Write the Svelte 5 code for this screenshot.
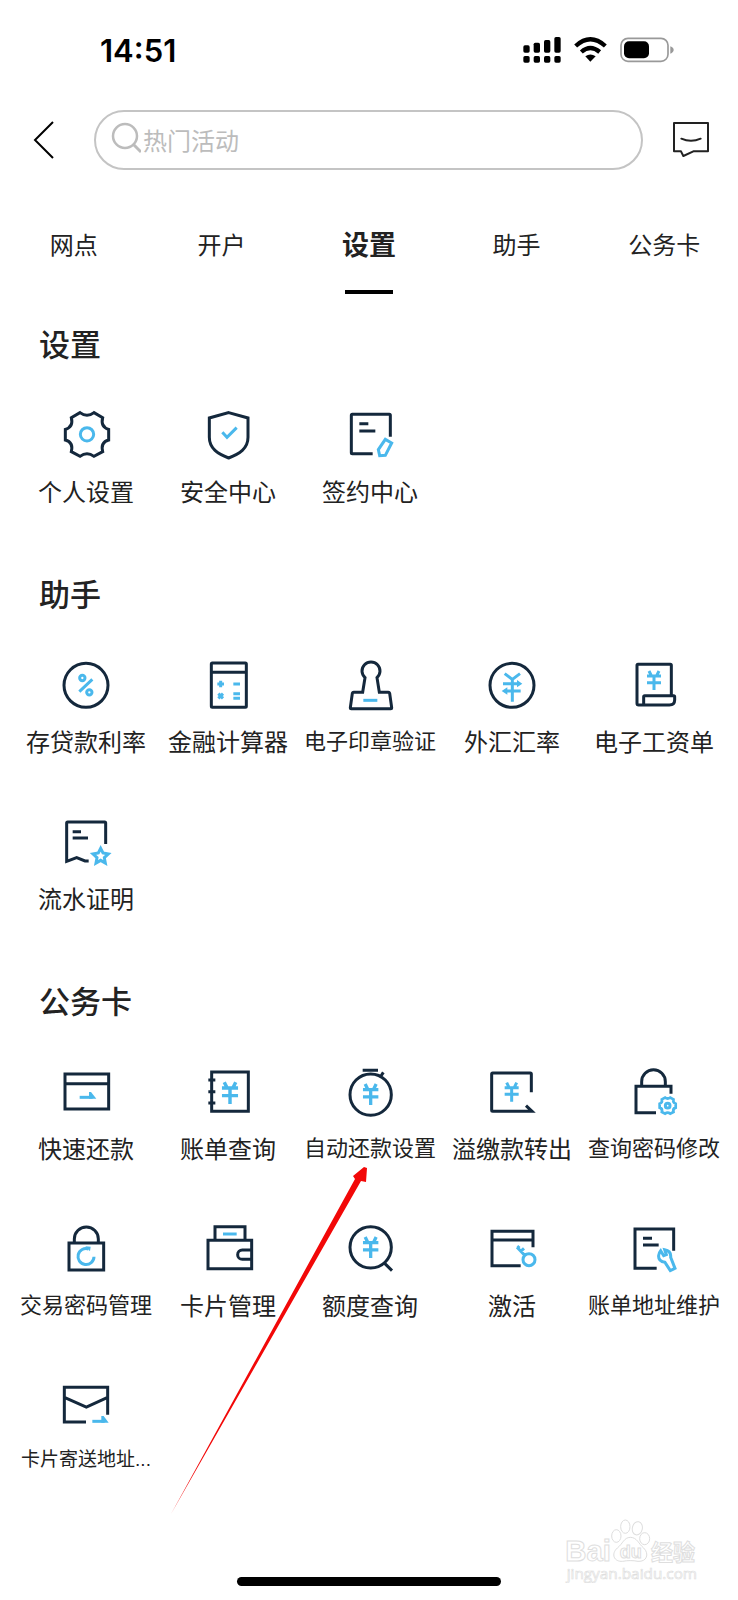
<script>
	const YEN = "M-15 -29L-8 -15M15 -29L8 -15M-21 -14H21M-21 6H21M0 -14V28";
	const GEAR =
		"M66 20Q87 36 108 20L134 35Q127 63 152 70V102Q127 109 134 137L108 151Q87 135 66 151L40 137Q47 109 22 102V70Q47 63 40 35Z";

	const tabs = ["网点", "开户", "设置", "助手", "公务卡"];
	let active = $state("设置");
	let keyword = $state("");

	// dark: outline, blue: accent strokes, fill: solid accent shapes, yen: [x, y, scale]
	const sections = [
		{
			title: "设置",
			items: [
				{ name: "个人设置", dark: GEAR, blue: "M107 85A20 20 0 1 1 67 85A20 20 0 1 1 107 85Z" },
				{
					name: "安全中心",
					dark: "M86 20L144 36V94C144 128 118 144 86 156C54 144 28 128 28 94V36Z",
					blue: "M67 79L81 94L110 65",
				},
				{
					name: "签约中心",
					dark: "M145 92V28Q145 25 142 25H31Q28 25 28 28V140Q28 143 31 143H92M52 53H79M52 75H100",
					blue: "M130 100L149 111L130 148L113 149L109 131Z",
				},
			],
		},
		{
			title: "助手",
			items: [
				{
					name: "存贷款利率",
					dark: "M150 88A66 66 0 1 1 18 88A66 66 0 1 1 150 88Z",
					blue: "M81 66A8 8 0 1 1 65 66A8 8 0 1 1 81 66ZM102 109A8 8 0 1 1 86 109A8 8 0 1 1 102 109ZM103 70L64 107",
				},
				{
					name: "金融计算器",
					dark: "M37 21H136Q139 21 139 24V151Q139 154 136 154H37Q34 154 34 151V24Q34 21 37 21ZM34 49H139",
					blue: "M52 84H72M62 74V94M100 84H120M55 113L69 127M69 113L55 127M100 113H120M100 127H120",
				},
				{
					name: "电子印章验证",
					dark: "M69 65L62 109H35Q32 109 31 112L25 155Q25 158 28 158H146Q149 158 149 155L143 112Q142 109 139 109H112L105 65A27 27 0 1 0 69 65Z",
					blue: "M64 133H106",
				},
				{
					name: "外汇汇率",
					dark: "M150 88A66 66 0 1 1 18 88A66 66 0 1 1 150 88Z",
					blue: "M62 53L85 70L108 53M85 70V137M57 83H104M66 105H110",
					fill: "M99 72L115 83L99 94ZM70 94L53 105L70 116Z",
				},
				{
					name: "电子工资单",
					dark: "M136 117V28Q136 25 133 25H36Q33 25 33 28V142Q33 147 38 147H130Q146 147 146 132V122Q146 119 143 119H56Q53 119 53 122V147",
					yen: [84, 74, 1],
				},
				{
					name: "流水证明",
					dark: "M143 93V30Q143 27 140 27H29Q26 27 26 30V145L56 134L81 144H92M44 56H69M44 75H90",
					blue: "M128 106L135 120L151 123L139 134L142 150L128 142L114 150L117 134L105 123L121 120Z",
				},
			],
		},
		{
			title: "公务卡",
			items: [
				{ name: "快速还款", dark: "M21 33H152V138H21ZM21 62H152", blue: "M65 103H104", fill: "M93 87H99L115 107H93Z" },
				{
					name: "账单查询",
					dark: "M35 27H145V145H35ZM25 51H46M25 86H46M25 120H46",
					yen: [90, 91, 1.15],
				},
				{
					name: "自动还款设置",
					dark: "M148 95A62 62 0 1 1 24 95A62 62 0 1 1 148 95ZM62 22H108M124 28L117 39",
					yen: [86, 95, 1.1],
				},
				{
					name: "溢缴款转出",
					dark: "M142 88V33Q142 30 139 30H26Q23 30 23 33V142Q23 145 26 145H144L126 128",
					yen: [83, 88, 1],
				},
				{
					name: "查询密码修改",
					dark: "M135 92V70H30V149H90M47 70V56A35 35 0 0 1 118 56V70",
					gear: [125, 128],
				},
				{
					name: "交易密码管理",
					dark: "M33 69H137V150H33ZM49 69V57A36 36 0 0 1 121 57V69",
					blue: "M108 110A24 24 0 1 1 92 87",
					fill: "M82 79L98 80L96 94Z",
				},
				{
					name: "卡片管理",
					dark: "M24 61H155V146H24ZM45 61V20H135V61M155 90H127A14 14 0 0 0 127 118H155",
					blue: "M69 42H110",
				},
				{
					name: "额度查询",
					dark: "M148 82A62 62 0 1 1 24 82A62 62 0 1 1 148 82ZM128 130L150 152",
					yen: [86, 83, 1.1],
				},
				{
					name: "激活",
					dark: "M147 82V34H24V137H110M24 60H147",
					blue: "M153 119A18 18 0 1 1 117 119A18 18 0 1 1 153 119ZM122 106L99 82M110 94L120 85M101 84L106 78",
				},
				{
					name: "账单地址维护",
					dark: "M143 92V27H27V145H92M51 55H78M51 75H98",
					blue: "M104 92L113 107L121 104L116 89Q136 92 134 112L147 145L133 152L117 127Q96 124 98 106Q99 98 104 92Z",
				},
				{
					name: "卡片寄送地址...",
					dark: "M149 113V31H19V135H84M19 61L85 90L149 61",
					blue: "M103 133H140",
					fill: "M130 117H137L152 137H130Z",
				},
			],
		},
	];

	/**
	 * long names step down in size so they stay on one line
	 * @param name
	 */
	function labelSize(name) {
		if (name.length > 6) return "small";
		return name.length > 5 ? "medium" : "";
	}
</script>

<div class="page">
	<div class="status">
		<span class="time">14:51</span>
		<svg width="38" height="26" viewBox="0 0 114 78">
			<rect x="1" y="25" width="19" height="22" rx="5" />
			<rect x="32" y="17" width="19" height="30" rx="5" />
			<rect x="63" y="9" width="19" height="38" rx="5" />
			<rect x="94" y="0" width="19" height="47" rx="5" />
			<rect x="1" y="57" width="19" height="20" rx="5" />
			<rect x="32" y="57" width="19" height="20" rx="5" />
			<rect x="63" y="57" width="19" height="20" rx="5" />
			<rect x="94" y="57" width="19" height="20" rx="5" />
		</svg>
		<svg width="33" height="26" viewBox="0 0 99 78">
			<path d="M5 27Q49 -13 94 27M22 45Q49 21 77 45" fill="none" stroke="#000" stroke-width="13" />
			<path d="M34 58Q49 47 65 58L49 74Z" />
		</svg>
		<svg class="battery" width="54" height="26" viewBox="0 0 162 78">
			<rect x="3" y="4" width="141" height="69" rx="21" fill="none" stroke="#999" stroke-width="5" />
			<rect x="12" y="13" width="75" height="51" rx="15" />
			<path d="M151 28Q161 32 161 39Q161 46 151 50Z" fill="#999" />
		</svg>
	</div>

	<header>
		<button class="icon-button" aria-label="返回">
			<svg width="22" height="40" viewBox="0 0 22 40" fill="none" stroke="#000" stroke-width="2">
				<path d="M20 2L2 20L20 38" />
			</svg>
		</button>
		<label class="search">
			<svg width="30" height="34" viewBox="0 0 30 34" fill="none" stroke="#bcbcbc">
				<circle cx="14" cy="14" r="12" stroke-width="2.5" />
				<path d="M22 22L30 30" stroke-width="3" />
			</svg>
			<input type="text" placeholder="热门活动" aria-label="搜索" bind:value={keyword} />
		</label>
		<button class="icon-button" aria-label="消息">
			<svg width="38" height="38" viewBox="0 0 114 114" fill="none" stroke="#222" stroke-width="6" stroke-linejoin="round">
				<path d="M6 6H108V91H64L34 105L27 91H6Z" />
				<path d="M28 53Q57 66 86 53" stroke-linecap="round" />
			</svg>
		</button>
	</header>

	<nav>
		{#each tabs as tab}
			<button class="tab" class:active={tab === active} onclick={() => (active = tab)}>{tab}</button>
		{/each}
	</nav>

	<main>
		{#each sections as section}
			<section>
				<h2>{section.title}</h2>
				<div class="grid">
					{#each section.items as item}
						<button class="item">
							<svg class="icon" viewBox="0 0 168 168">
								<path class="dark" d={item.dark} />
								{#if item.blue}
									<path class="blue" d={item.blue} />
								{/if}
								{#if item.fill}
									<path class="solid" d={item.fill} />
								{/if}
								{#if item.yen}
									<path class="blue" d={YEN} transform="translate({item.yen[0]} {item.yen[1]}) scale({item.yen[2]})" />
								{/if}
								{#if item.gear}
									<g transform="translate({item.gear[0]} {item.gear[1]})">
										<path class="blue tiny" d={GEAR} transform="scale(0.37) translate(-87 -86)" />
										<circle class="blue" r="7" />
									</g>
								{/if}
							</svg>
							<span class="label {labelSize(item.name)}">{item.name}</span>
						</button>
					{/each}
				</div>
			</section>
		{/each}
	</main>

	<div class="home"></div>

	<svg class="pointer" width="204" height="356" viewBox="0 0 204 356">
		<path d="M3 354L187 19L185 16L196 7L199 8L198 22L193 21Z" fill="#f20808" />
	</svg>

	<svg class="watermark" width="137" height="65" viewBox="0 0 411 195">
		<g fill="#fff" stroke="#dedede" stroke-width="3">
			<text class="latin" x="4" y="130" font-size="88">Bai</text>
			<ellipse cx="157" cy="54" rx="14" ry="19" />
			<ellipse cx="184" cy="26" rx="14" ry="20" />
			<ellipse cx="220" cy="31" rx="15" ry="20" transform="rotate(12 220 31)" />
			<ellipse cx="242" cy="62" rx="15" ry="18" />
			<path d="M199 58C219 58 224 78 239 90C257 108 248 132 222 130C207 127 190 127 176 130C150 132 140 108 160 90C176 78 180 58 199 58Z" />
			<text class="latin" x="167" y="121" font-size="54">du</text>
			<text class="han" x="261" y="125" font-size="66">经验</text>
			<text class="url" x="8" y="184" font-size="46">jingyan.baidu.com</text>
		</g>
	</svg>
</div>

<style>
	:global(body) {
		background: #fff;
	}

	.page {
		position: relative;
		display: flex;
		flex-direction: column;
		min-height: 100vh;
		box-sizing: border-box;
		padding-bottom: 14px;
		overflow: hidden;
		font-family: "Liberation Sans", "Noto Sans CJK SC", sans-serif;
		color: #222;
	}

	button {
		border: 0;
		padding: 0;
		background: none;
		font: inherit;
		color: inherit;
	}

	svg {
		display: block;
		flex: none;
	}

	.status {
		display: flex;
		align-items: center;
		gap: 13px;
		height: 98px;
		padding: 2px 64px 0 100px;
		box-sizing: border-box;
		color: #000;
	}

	.time {
		margin-right: auto;
		font: 600 31px "Inter", sans-serif;
	}

	header {
		display: flex;
		align-items: center;
		gap: 29px;
		padding: 12px 28px 0 33px;
	}

	.search {
		display: flex;
		flex: 1;
		align-items: center;
		gap: 2px;
		height: 60px;
		margin-left: 10px;
		padding: 0 24px 2px 15px;
		box-sizing: border-box;
		border: 2px solid #c4c4c4;
		border-radius: 30px;
	}

	input {
		flex: 1;
		min-width: 0;
		padding: 0;
		border: 0;
		outline: 0;
		background: none;
		font: 24px "Noto Sans CJK SC", sans-serif;
	}

	input::placeholder {
		color: #bcbcbc;
		opacity: 1;
	}

	nav {
		display: flex;
		margin-top: 30px;
	}

	.tab {
		position: relative;
		flex: 1;
		height: 94px;
		padding-bottom: 8px;
		font-size: 24px;
	}

	.tab.active {
		font-size: 27px;
		font-weight: 600;
	}

	.tab.active::after {
		content: "";
		position: absolute;
		left: 50%;
		bottom: 0;
		width: 48px;
		height: 4px;
		margin-left: -24px;
		background: #000;
	}

	main {
		display: flex;
		flex-direction: column;
		gap: 68px;
		padding: 32px 13px 0 15px;
	}

	h2 {
		margin: 0 0 40px 24px;
		font-size: 31px;
		font-weight: 500;
		line-height: 40px;
	}

	.grid {
		display: grid;
		grid-template-columns: repeat(5, 1fr);
		row-gap: 55px;
	}

	.item {
		display: flex;
		flex-direction: column;
		align-items: center;
		height: 102px;
	}

	.icon {
		width: 56px;
		height: 56px;
		margin-bottom: 14px;
	}

	.dark,
	.blue {
		fill: none;
		stroke-width: 9;
	}

	.dark {
		stroke: #14283c;
	}

	.blue {
		stroke: #4ab8ec;
	}

	.tiny {
		stroke-width: 22;
	}

	.solid {
		fill: #4ab8ec;
	}

	.label {
		font-size: 24px;
		line-height: 34px;
		white-space: nowrap;
	}

	.label.medium {
		font-size: 22px;
		line-height: 32px;
	}

	.label.small {
		font-size: 19px;
		line-height: 26px;
	}

	.home {
		width: 264px;
		height: 9px;
		margin: auto auto 0;
		border-radius: 5px;
		background: #000;
	}

	.pointer {
		position: absolute;
		left: 168px;
		top: 1160px;
		pointer-events: none;
	}

	.watermark {
		position: absolute;
		right: 37px;
		bottom: 17px;
		pointer-events: none;
	}

	.latin {
		font-family: "Liberation Sans", sans-serif;
		font-weight: 700;
	}

	.han {
		font-family: "Noto Sans CJK SC", sans-serif;
		font-weight: 700;
	}

	.url {
		font-family: "Open Sans", sans-serif;
		stroke-width: 2;
	}
</style>
